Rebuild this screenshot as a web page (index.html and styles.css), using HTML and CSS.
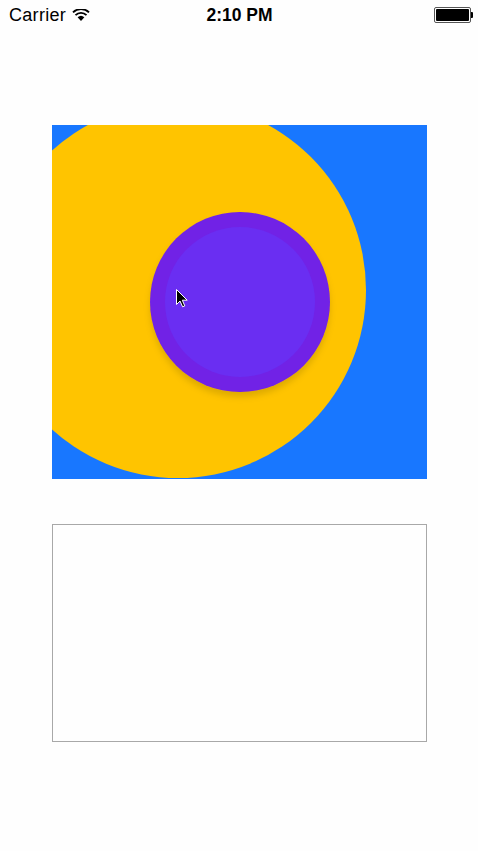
FILE: index.html
```html
<!DOCTYPE html>
<html>
<head>
<meta charset="utf-8">
<link rel="stylesheet" href="styles.css">
</head>
<body>
<div class="statusbar">
  <div class="sb-left">
    <span class="carrier">Carrier</span>
    <svg class="wifi" width="18" height="12" viewBox="0 0 18 12">
      <path d="M9 12 L5.6 8.3 A5 5 0 0 1 12.4 8.3 Z" fill="#000"/>
      <path d="M3.5 6.1 A7.8 7.8 0 0 1 14.5 6.1" fill="none" stroke="#000" stroke-width="1.9"/>
      <path d="M1 3.4 A11.5 11.5 0 0 1 17 3.4" fill="none" stroke="#000" stroke-width="1.9"/>
    </svg>
  </div>
  <div class="time">2:10 PM</div>
  <div class="sb-right">
    <div class="battery"><div class="battery-fill"></div></div>
    <div class="battery-nub"></div>
  </div>
</div>
<main class="content">
  <svg class="canvas" width="375" height="354" viewBox="0 0 375 354">
    <defs>
      <filter id="sh" x="-20%" y="-20%" width="140%" height="150%">
        <feDropShadow dx="0" dy="5" stdDeviation="3" flood-color="#000" flood-opacity="0.13"/>
      </filter>
    </defs>
    <rect x="0" y="0" width="375" height="354" fill="#1877ff"/>
    <circle cx="126" cy="165" r="188" fill="#ffc400"/>
    <circle cx="188" cy="177" r="90" fill="#7121e6" filter="url(#sh)"/>
    <circle cx="188" cy="177" r="75" fill="#6a2ef2"/>
    <path d="M124.5 164.5 L124.5 179.5 L128 176 L130.6 181.8 L132.8 180.9 L130.3 175.2 L135.2 175.2 Z" fill="#000" stroke="#fff" stroke-width="1" stroke-linejoin="round"/>
  </svg>
  <div class="panel"></div>
</main>
</body>
</html>
```

FILE: styles.css
```css
html, body {
  margin: 0;
  padding: 0;
}
body {
  width: 478px;
  height: 851px;
  background: #fefefe;
  font-family: "Liberation Sans", Arial, sans-serif;
  color: #000;
  overflow: hidden;
}
.statusbar {
  height: 30px;
  display: grid;
  grid-template-columns: 1fr auto 1fr;
  align-items: center;
}
.sb-left {
  display: flex;
  align-items: center;
  padding-left: 9px;
  gap: 6px;
}
.carrier {
  font-size: 18px;
  letter-spacing: 0.3px;
  line-height: 30px;
}
.wifi {
  display: block;
  margin-top: -1px;
}
.time {
  font-size: 17.5px;
  font-weight: bold;
  line-height: 30px;
  margin-left: 1px;
}
.sb-right {
  display: flex;
  justify-content: flex-end;
  align-items: center;
  padding-right: 5px;
  margin-top: -1px;
}
.battery {
  width: 33px;
  height: 12px;
  border: 1px solid #555;
  border-radius: 2px;
  padding: 1px;
  box-sizing: content-box;
  display: flex;
}
.battery-fill {
  flex: 1;
  background: #000;
  border-radius: 1px;
}
.battery-nub {
  width: 2px;
  height: 6px;
  background: #000;
  border-radius: 0 1px 1px 0;
}
.content {
  padding: 95px 0 0 52px;
  display: flex;
  flex-direction: column;
  gap: 45px;
}
.canvas {
  display: block;
}
.panel {
  width: 373px;
  height: 216px;
  border: 1px solid #a8a8a8;
  background: #fefefe;
}
```
